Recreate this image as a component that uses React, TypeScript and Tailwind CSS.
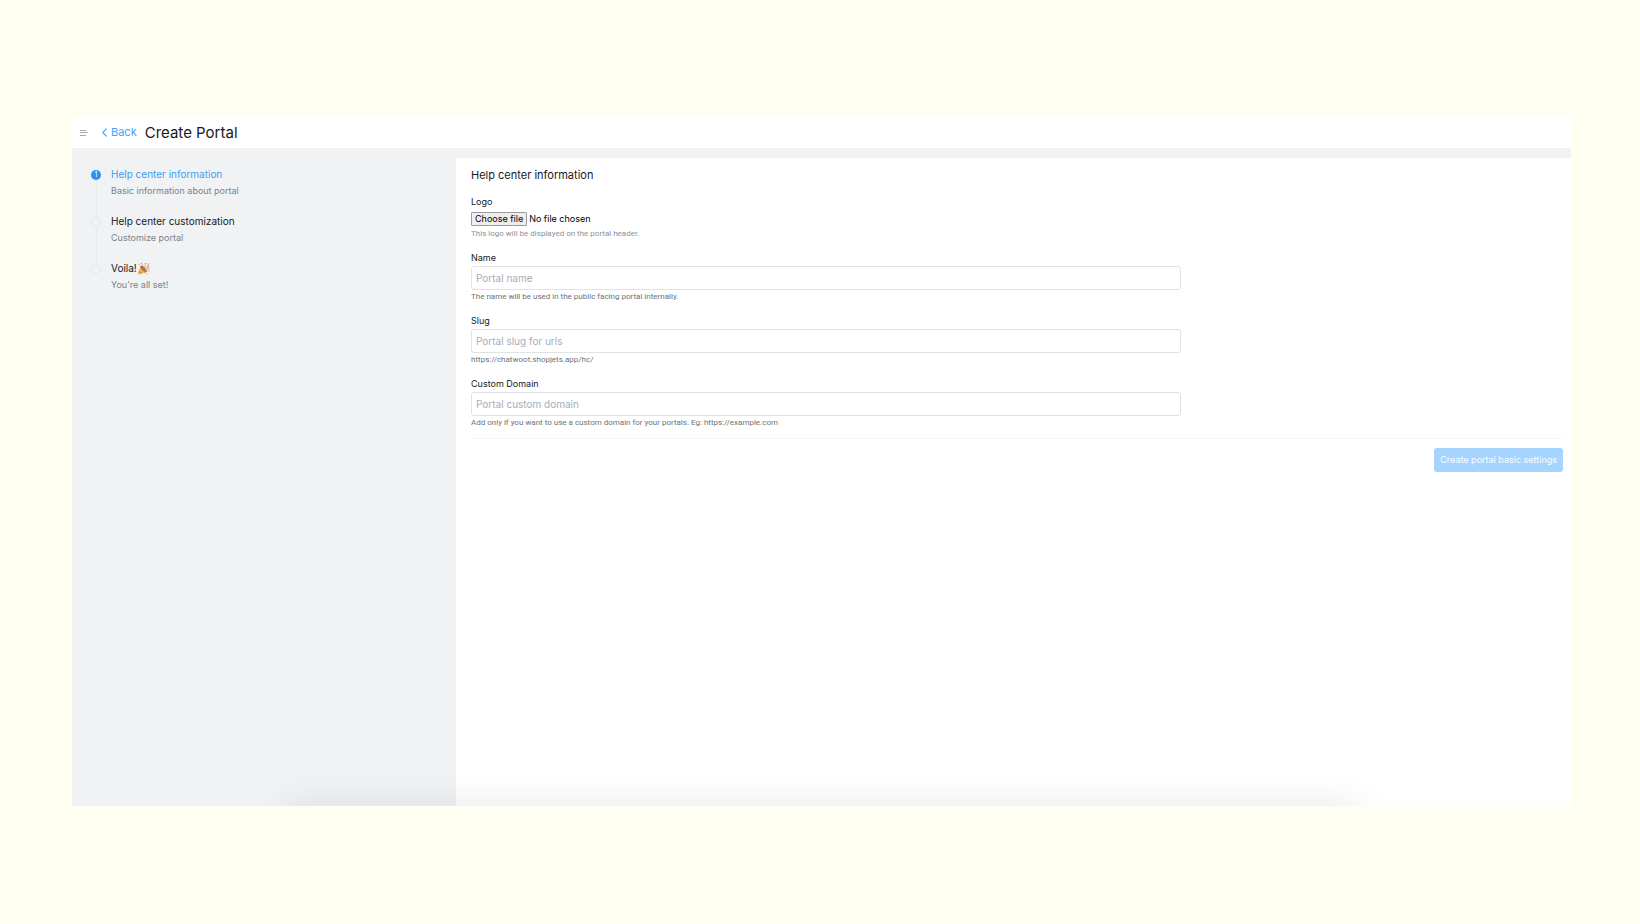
import React from 'react';

type Field = { id: string; label: string; placeholder: string; help: string };

const fields: Field[] = [
  { id: 'name', label: 'Name', placeholder: 'Portal name', help: 'The name will be used in the public facing portal internally.' },
  { id: 'slug', label: 'Slug', placeholder: 'Portal slug for urls', help: 'https://chatwoot.shopjets.app/hc/' },
  {
    id: 'domain',
    label: 'Custom Domain',
    placeholder: 'Portal custom domain',
    help: 'Add only if you want to use a custom domain for your portals. Eg: https://example.com',
  },
];

function PartyPopper() {
  return (
    <svg viewBox="0 0 25 25" className="h-[13px] w-[13px] shrink-0" role="img" aria-label="Party popper">
      <path d="M1 24 7 7c4 1 10 7 12 12L1 24Z" fill="#f3b850" />
      <path d="m3 20 4 3 4-1-7-6-1 4Zm3-8 8 9 3-1L7 9l-1 3Z" fill="#d9943f" />
      <ellipse cx="13" cy="13" rx="2.500" ry="8" transform="rotate(-44 13 13)" fill="#94694a" />
      <path d="M12 13c4-3 5-7 3-11M15 15c2-5 5-7 9-6M16 17c3-2 6-1 8 2" fill="none" stroke="#f0a045" strokeWidth="1.800" />
      <path d="m18 2 2 2M8 2l1 2m13 1 2-2M3 4l2 1m16 9 3-1m-6 9 2 2M10 5l2 2" stroke="#c07a70" strokeWidth="1.800" />
      <path d="m20 7 2-1m-3 5 2 1" stroke="#6d9fc4" strokeWidth="2" />
    </svg>
  );
}

const steps: { title: string; text: string; active?: boolean; popper?: boolean }[] = [
  { title: 'Help center information', text: 'Basic information about portal', active: true },
  { title: 'Help center customization', text: 'Customize portal' },
  { title: 'Voila!', text: "You're all set!", popper: true },
];

function Header() {
  return (
    <header className="flex h-[31px] items-center bg-white pl-2">
      <button type="button" aria-label="Toggle menu" className="flex h-4 w-4 items-center text-[#8f9499]">
        <svg viewBox="0 0 8 8" className="h-2 w-2" fill="none" stroke="currentColor" strokeWidth="0.800">
          <path d="M0 1.500h6M0 3.500h7.500M0 6.500h6" />
        </svg>
      </button>
      <a href="#back" className="ml-1.5 flex items-center gap-1 text-[11px] text-[#45a2f2]">
        <svg viewBox="0 0 5 9" className="h-[9px] w-[5px]" fill="none" stroke="currentColor" strokeWidth="1.100" strokeLinecap="round" strokeLinejoin="round">
          <path d="M4.400.8.8 4.500l3.600 3.700" />
        </svg>
        Back
      </a>
      <h1 className="ml-2 pt-px text-[15px] text-[#17191c]">Create Portal</h1>
    </header>
  );
}

function Sidebar() {
  return (
    <aside className="w-[384px] shrink-0 pt-2.5 pl-[19px]">
      <ol>
        {steps.map((step, i) => (
          <li key={step.title} className="flex h-[47px] gap-2.5">
            <div className="flex w-2.5 flex-col items-center">
              {i > 0 ? <div className="h-3 w-px shrink-0 bg-[#e6e9ec]" /> : <div className="h-3 shrink-0" />}
              {step.active ? (
                <span className="flex h-2.5 w-2.5 shrink-0 items-center justify-center rounded-full bg-[#2e90ee] text-[7px] text-white">
                  1
                </span>
              ) : (
                <span className="h-2.5 w-2.5 shrink-0 rounded-full border border-[#e6e9ec]" />
              )}
              {i < 2 && <div className="w-px grow bg-[#e6e9ec]" />}
            </div>
            <div className="pt-2">
              <h2 className={step.active ? 'text-[10px] leading-4 text-[#3d9df0]' : 'flex items-center text-[10px] leading-4 text-[#17191c]'}>
                {step.title}
                {step.popper && <PartyPopper />}
              </h2>
              <p className="text-[9px] leading-[17px] text-[#7b828a]">{step.text}</p>
            </div>
          </li>
        ))}
      </ol>
    </aside>
  );
}

function PortalForm() {
  return (
    <main className="relative z-10 mt-2.5 grow bg-white pt-[9px] pr-2 pl-[15px]">
      <h2 className="text-[11px] leading-4 text-[#17191c]">Help center information</h2>
      <form>
        <div className="mt-[11px] h-14">
          <label htmlFor="logo" className="block h-[18px] text-[9px] leading-4 text-[#17191c]">Logo</label>
          <input id="logo" type="file" className="sr-only" />
          <label htmlFor="logo" className="flex items-center gap-0.5 text-[9px] leading-3 text-black">
            <span className="rounded-[1px] border border-[#999ca0] bg-[#eeeeee] px-[3px]">Choose file</span>
            No file chosen
          </label>
          <p className="font-[Roboto,sans-serif] text-[8px] leading-4 text-[#8b9198]">This logo will be displayed on the portal header.</p>
        </div>
        {fields.map((f) => (
          <div key={f.id} className="h-[63px]">
            <label htmlFor={f.id} className="block text-[9px] leading-4 text-[#17191c]">{f.label}</label>
            <input
              id={f.id}
              type="text"
              placeholder={f.placeholder}
              className="block h-6 w-[65%] rounded-[3px] border border-[#dfe2e6] bg-white px-1 text-[10px] text-[#2b2f33] placeholder:text-[#a6adb8]"
            />
            <p className="font-[Roboto,sans-serif] text-[8px] leading-[14px] text-[#6b727a]">{f.help}</p>
          </div>
        ))}
        <div className="-mt-px flex justify-end border-t border-[#f5f6f7] pt-[9px]">
          <button type="submit" disabled className="h-6 rounded-[3px] bg-[#a5d5ff] px-1.5 text-[9px] text-white/90">
            Create portal basic settings
          </button>
        </div>
      </form>
    </main>
  );
}

export default function App() {
  return (
    <div className="flex min-h-screen flex-col bg-[#fefff0] px-[72px] pt-[117px] pr-[69px] pb-[118px] font-['Inter',sans-serif]">
      <div className="relative flex grow flex-col overflow-hidden bg-[#f0f2f4]">
        <Header />
        <div className="flex grow">
          <Sidebar />
          <PortalForm />
        </div>
        <div className="pointer-events-none absolute inset-x-[15%] -bottom-3 z-20 h-px shadow-[0_0_36px_12px_rgba(0,0,0,0.1)]" />
      </div>
    </div>
  );
}
